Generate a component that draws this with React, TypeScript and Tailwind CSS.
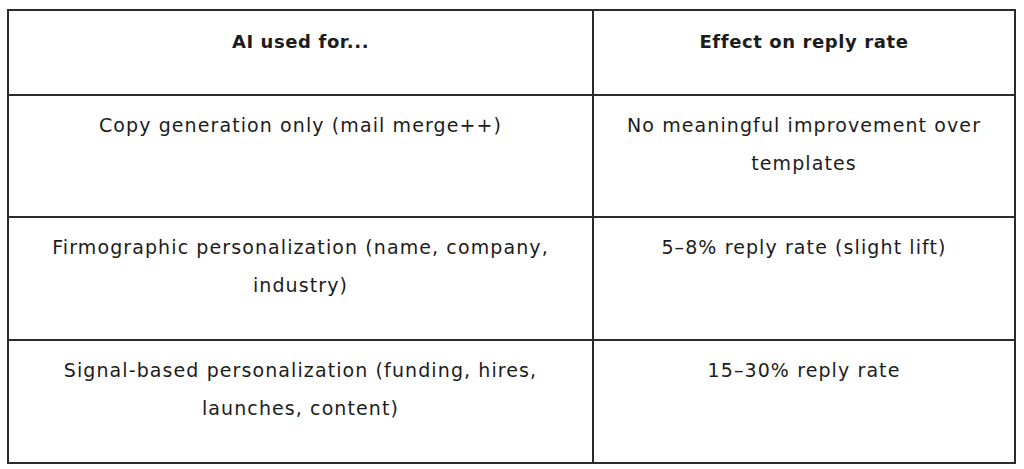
const rows: { used: string[]; effect: string[] }[] = [
  { used: ["Copy generation only (mail merge++)"], effect: ["No meaningful improvement over", "templates"] },
  { used: ["Firmographic personalization (name, company,", "industry)"], effect: ["5–8% reply rate (slight lift)"] },
  { used: ["Signal-based personalization (funding, hires,", "launches, content)"], effect: ["15–30% reply rate"] },
]

function Lines(props: { lines: string[] }) {
  return (
    <>
      {props.lines.map((l, i) => (
        <span key={i} className="block whitespace-nowrap">{l}</span>
      ))}
    </>
  )
}

export default function App() {
  return (
    <div className="w-[1024px] h-[469px] bg-white pl-[7px] pt-[9px] font-['DejaVu_Sans',sans-serif] text-[#1c1c1c]">
      <table className="border-collapse border-2 border-[#2b2b2b] w-[1007px] table-fixed">
        <colgroup>
          <col className="w-[585px]" />
          <col className="w-[422px]" />
        </colgroup>
        <thead>
          <tr className="h-[85px]">
            <th className="border-2 border-[#2b2b2b] align-top pt-[12px] text-[18px] leading-[38px] font-bold tracking-[0.6px]">AI used for...</th>
            <th className="border-2 border-[#2b2b2b] align-top pt-[12px] text-[18px] leading-[38px] font-bold tracking-[0.6px]">Effect on reply rate</th>
          </tr>
        </thead>
        <tbody>
          {rows.map((r, i) => (
            <tr key={i} className={i === 0 ? "h-[122px]" : "h-[123px]"}>
              <td className="border-2 border-[#2b2b2b] align-top text-center pt-[10px] text-[19px] leading-[38px] tracking-[1.1px]">
                <Lines lines={r.used} />
              </td>
              <td className="border-2 border-[#2b2b2b] align-top text-center pt-[10px] text-[19px] leading-[38px] tracking-[1.1px]">
                <Lines lines={r.effect} />
              </td>
            </tr>
          ))}
        </tbody>
      </table>
    </div>
  )
}
